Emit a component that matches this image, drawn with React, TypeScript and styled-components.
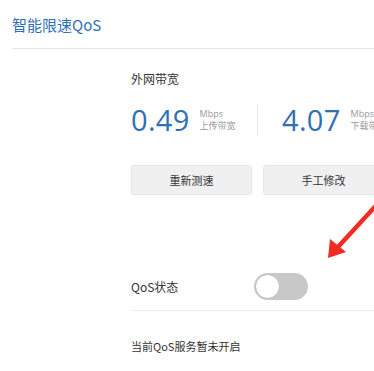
import React from 'react';
import styled, { createGlobalStyle } from 'styled-components';

const GlobalStyle = createGlobalStyle`
  html, body {
    margin: 0;
    padding: 0;
    background: #ffffff;
  }
  body {
    font-family: "Noto Sans CJK SC", "Noto Sans", sans-serif;
    color: #333333;
  }
`;

type Stat = {
  value: string;
  label: string;
};

const stats: Stat[] = [
  { value: '0.49', label: '上传带宽' },
  { value: '4.07', label: '下载带宽' },
];

const App = () => {
  return (
    <Page>
      <GlobalStyle />
      <Header>
        <Title>智能限速QoS</Title>
      </Header>
      <Content>
        <SectionLabel>外网带宽</SectionLabel>
        <StatsRow>
          {stats.map((stat, i) => (
            <StatItem key={stat.label} $first={i === 0}>
              <StatValue>{stat.value}</StatValue>
              <StatUnit>
                <Unit>Mbps</Unit>
                <UnitLabel>{stat.label}</UnitLabel>
              </StatUnit>
            </StatItem>
          ))}
        </StatsRow>
        <ButtonRow>
          <Button>重新测速</Button>
          <Button>手工修改</Button>
        </ButtonRow>
        <StatusRow>
          <StatusLabel>QoS状态</StatusLabel>
          <Toggle>
            <Knob />
          </Toggle>
        </StatusRow>
        <Note>当前QoS服务暂未开启</Note>
        <Arrow width="60" height="64" viewBox="0 0 60 64">
          <line x1="58" y1="2" x2="14" y2="50" stroke="#f12a22" strokeWidth="4.5" strokeLinecap="round" />
          <polygon points="4,61 6,42 22,55" fill="#f12a22" />
        </Arrow>
      </Content>
    </Page>
  );
};

export default App;

const Page = styled.div`
  position: relative;
  width: 374px;
  height: 371px;
  overflow: hidden;
  background: #ffffff;
`;

const Header = styled.div`
  margin-left: 12px;
  height: 49px;
  border-bottom: 1px solid #e2e5ea;
  box-sizing: border-box;
  padding-top: 15px;
`;

const Title = styled.div`
  font-size: 15px;
  line-height: 20px;
  color: #2f6fb6;
`;

const Content = styled.div`
  position: relative;
  padding-left: 131px;
  padding-top: 21px;
`;

const SectionLabel = styled.div`
  font-size: 12px;
  line-height: 18px;
  color: #333333;
`;

const StatsRow = styled.div`
  display: flex;
  align-items: center;
  margin-top: 16px;
  height: 32px;
  white-space: nowrap;
`;

const StatItem = styled.div<{ $first: boolean }>`
  display: flex;
  flex-shrink: 0;
  align-items: center;
  height: 32px;
  padding-left: ${(p) => (p.$first ? '0' : '24px')};
  width: ${(p) => (p.$first ? '127px' : 'auto')};
  border-right: ${(p) => (p.$first ? '1px solid #e8e8e8' : 'none')};
  box-sizing: border-box;
`;

const StatValue = styled.span`
  font-family: "Open Sans", "Noto Sans", sans-serif;
  font-weight: 400;
  font-size: 29px;
  line-height: 32px;
  color: #2f6fb6;
  letter-spacing: 0.3px;
`;

const StatUnit = styled.div`
  display: flex;
  flex-direction: column;
  margin-left: 10px;
`;

const Unit = styled.span`
  font-family: "Open Sans", "Noto Sans", sans-serif;
  font-size: 9px;
  line-height: 12px;
  color: #999999;
`;

const UnitLabel = styled.span`
  font-size: 9px;
  line-height: 12px;
  color: #999999;
`;

const ButtonRow = styled.div`
  display: flex;
  gap: 11px;
  margin-top: 29px;
`;

const Button = styled.button`
  flex: 0 0 121px;
  height: 30px;
  border: 1px solid #e6e6e6;
  border-radius: 3px;
  background: #f0f0f0;
  font-family: "Noto Sans CJK SC", sans-serif;
  font-size: 11px;
  color: #333333;
  padding: 0;
`;

const StatusRow = styled.div`
  display: flex;
  align-items: center;
  margin-top: 67px;
  height: 49px;
  border-bottom: 1px solid #ececec;
  box-sizing: border-box;
`;

const StatusLabel = styled.span`
  width: 123px;
  font-size: 12px;
  color: #333333;
`;

const Toggle = styled.div`
  width: 54px;
  height: 27px;
  border-radius: 14px;
  background: #c8c8c8;
  display: flex;
  align-items: center;
  padding-left: 1px;
  box-sizing: border-box;
`;

const Knob = styled.div`
  width: 23px;
  height: 23px;
  border-radius: 50%;
  background: #ffffff;
  border: 1px solid #bdbdbd;
`;

const Note = styled.div`
  margin-top: 27px;
  font-size: 11px;
  line-height: 16px;
  color: #333333;
`;

const Arrow = styled.svg`
  position: absolute;
  left: 324px;
  top: 148px;
`;
